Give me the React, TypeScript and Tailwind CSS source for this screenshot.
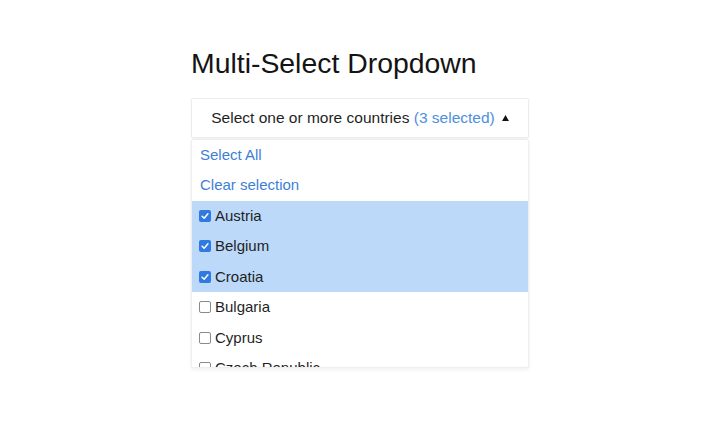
const selected = ["Austria", "Belgium", "Croatia"];
const others = ["Bulgaria", "Cyprus", "Czech Republic", "Denmark"];

function Check({ on }: { on: boolean }) {
  if (on) {
    return (
      <span className="flex h-[12px] w-[12px] shrink-0 items-center justify-center rounded-[2px] bg-[#2f7ae0]">
        <svg viewBox="0 0 12 12" className="h-[10px] w-[10px]">
          <path d="M2.5 6.3 L5 8.6 L9.5 3.4" fill="none" stroke="white" strokeWidth="1.8" strokeLinecap="round" strokeLinejoin="round" />
        </svg>
      </span>
    );
  }
  return <span className="h-[12px] w-[12px] shrink-0 rounded-[2px] border border-[#8a8a8a] bg-white" />;
}

export default function App() {
  return (
    <div className="min-h-screen bg-white font-['Liberation_Sans',Arial,sans-serif] text-[#1f1f1f]">
      <div className="ml-[191px] w-[338px] pt-[46px]">
        <h2 className="text-[28.4px] leading-[34px] text-[#141414]">Multi-Select Dropdown</h2>
        <div className="mt-[18px] flex h-[40px] items-center justify-center gap-[7px] rounded-[2px] border border-[#ececec] bg-white text-[15.5px] shadow-[0_1px_2px_rgba(0,0,0,0.06)]">
          <span>
            Select one or more countries <span className="text-[#4d8fe0]">(3 selected)</span>
          </span>
          <svg viewBox="0 0 8 7" className="mt-[-1px] h-[6px] w-[7px]">
            <path d="M4 0 L8 7 L0 7 Z" fill="#111" />
          </svg>
        </div>
        <div className="mt-px h-[229px] overflow-hidden rounded-[2px] border border-[#eeeeee] bg-white text-[15px] shadow-[0_2px_4px_rgba(0,0,0,0.06)]">
          <div className="flex h-[30.5px] items-center px-[8px] text-[#3d7fd6]">Select All</div>
          <div className="flex h-[30px] items-center px-[8px] text-[#3d7fd6]">Clear selection</div>
          <div className="bg-[#bcd9fa]">
            {selected.map((c) => (
              <div key={c} className="flex h-[30.5px] items-center gap-[4px] px-[7px]">
                <Check on />
                <span>{c}</span>
              </div>
            ))}
          </div>
          {others.map((c) => (
            <div key={c} className="flex h-[30.5px] items-center gap-[4px] px-[7px]">
              <Check on={false} />
              <span>{c}</span>
            </div>
          ))}
        </div>
      </div>
    </div>
  );
}
